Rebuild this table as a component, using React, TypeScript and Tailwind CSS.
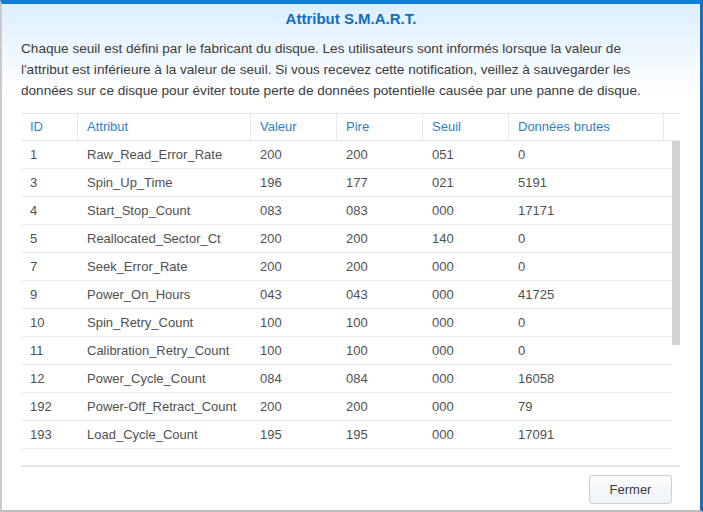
const rows = [
  ['1', 'Raw_Read_Error_Rate', '200', '200', '051', '0'],
  ['3', 'Spin_Up_Time', '196', '177', '021', '5191'],
  ['4', 'Start_Stop_Count', '083', '083', '000', '17171'],
  ['5', 'Reallocated_Sector_Ct', '200', '200', '140', '0'],
  ['7', 'Seek_Error_Rate', '200', '200', '000', '0'],
  ['9', 'Power_On_Hours', '043', '043', '000', '41725'],
  ['10', 'Spin_Retry_Count', '100', '100', '000', '0'],
  ['11', 'Calibration_Retry_Count', '100', '100', '000', '0'],
  ['12', 'Power_Cycle_Count', '084', '084', '000', '16058'],
  ['192', 'Power-Off_Retract_Count', '200', '200', '000', '79'],
  ['193', 'Load_Cycle_Count', '195', '195', '000', '17091'],
];

const widths = ['w-[57px]', 'w-[173px]', 'w-[86px]', 'w-[86px]', 'w-[86px]', 'w-[155px]'];
const headers = ['ID', 'Attribut', 'Valeur', 'Pire', 'Seuil', 'Données brutes'];

export default function App() {
  return (
    <div className="w-[703px] h-[512px] bg-white font-['Liberation_Sans',Arial,sans-serif] text-[13px] overflow-hidden">
      <div className="h-full flex flex-col border-t-[4px] border-t-[#0c7ed8] border-l-2 border-l-[#c9c9c9] border-r-[3px] border-r-[#1f6db5] border-b-[2px] border-b-[#bdbdbd] bg-gradient-to-b from-[#dcefff] via-white via-[18%] to-white">
        {/* title */}
        <div className="h-[30px] flex items-center justify-center pt-[1px]">
          <h1 className="font-bold text-[15px] text-[#136cc3]">Attribut S.M.A.R.T.</h1>
        </div>

        <div className="pl-[19px] pr-[19px]">
          <p className="text-[#3b3b3b] text-[13.6px] leading-[21px] mt-[4px] whitespace-nowrap">
            Chaque seuil est défini par le fabricant du disque. Les utilisateurs sont informés lorsque la valeur de
            <br />
            l'attribut est inférieure à la valeur de seuil. Si vous recevez cette notification, veillez à sauvegarder les
            <br />
            données sur ce disque pour éviter toute perte de données potentielle causée par une panne de disque.
          </p>

          {/* table */}
          <div className="mt-[12px] w-[659px]">
            <div className="flex h-[28px] border-t border-t-[#dfe6ec] border-b border-b-[#dfe6ec] text-[#2e7fc8]">
              {headers.map((h, i) => (
                <div key={h} className={`${widths[i]} flex items-center pl-[9px] border-r border-r-[#e3e9ef]`}>
                  {h}
                </div>
              ))}
              <div className="flex-1" />
            </div>
            <div className="flex">
              <div className="w-[651px]">
                {rows.map((r) => (
                  <div key={r[0]} className="flex h-[28px] items-center border-b border-b-[#ececec] text-[#4f4f4f]">
                    {r.map((c, i) => (
                      <div key={i} className={`${widths[i]} pl-[9px]`}>
                        {c}
                      </div>
                    ))}
                  </div>
                ))}
              </div>
              <div className="w-[8px]">
                <div className="h-[204px] bg-[#d4d4d4]" />
              </div>
            </div>
            <div className="mt-[16px] h-[2px] bg-[#e4e4e4]" />
          </div>

          <div className="flex justify-end pr-[9px] mt-[8px]">
            <button className="w-[83px] h-[29px] rounded-[3px] border border-[#c5d0da] bg-gradient-to-b from-[#fbfcfd] to-[#eef3f7] text-[#3a3a3a] text-[13px]">
              Fermer
            </button>
          </div>
        </div>
      </div>
    </div>
  );
}
